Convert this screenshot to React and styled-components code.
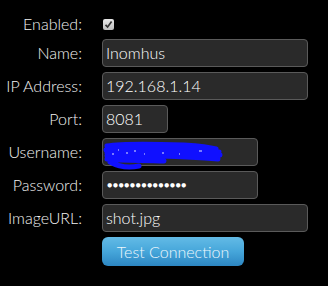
import React from 'react'
import styled, { createGlobalStyle } from 'styled-components'

const Global = createGlobalStyle`
  html, body {
    margin: 0;
    background: #000;
  }
  body {
    font-family: Lato, "Liberation Sans", sans-serif;
    font-weight: 300;
    color: #fff;
  }
`

const Form = styled.div`
  width: 328px;
  height: 286px;
  padding-top: 14px;
  box-sizing: border-box;
  display: grid;
  grid-template-columns: 82px auto;
  grid-template-rows: 20px repeat(7, 28px);
  column-gap: 20px;
  row-gap: 5px;
  align-items: center;
  align-content: start;
  justify-items: start;
`

const Label = styled.label`
  justify-self: end;
  font-size: 16px;
  color: #f2f2f2;
  line-height: 20px;
`

const Check = styled.span`
  width: 11px;
  height: 11px;
  margin-left: 1px;
  background: linear-gradient(#e8e8e8, #bdbdbd);
  border-radius: 2px;
  display: flex;
  align-items: center;
  justify-content: center;
`

const Field = styled.div`
  position: relative;
  width: ${p => p.$w}px;
  height: 28px;
  box-sizing: border-box;
  background: #2a2a2a;
  border: 1px solid #5a5a5a;
  border-radius: 4px;
  display: flex;
  align-items: center;
  padding-left: 3px;
  font-size: 16px;
  line-height: 20px;
  color: #fff;
  overflow: visible;
`

const Dots = styled.span`
  font-size: 9px;
  letter-spacing: 0.3px;
  padding-left: 1px;
`

const Scribble = styled.svg`
  position: absolute;
  left: 1px;
  top: 3px;
  overflow: visible;
`

const Button = styled.button`
  width: 142px;
  height: 29px;
  border: none;
  border-radius: 6px;
  background: linear-gradient(#63bbe6 0%, #46a6da 50%, #2c86c2 100%);
  color: #eef7fc;
  font-family: Lato, "Liberation Sans", sans-serif;
  font-weight: 300;
  font-size: 16px;
  padding: 0;
`

export default function App() {
  return (
    <>
      <Global />
      <Form>
        <Label>Enabled:</Label>
        <Check>
          <svg width="9" height="9" viewBox="0 0 9 9">
            <path d="M1.5 4.8 L3.6 7 L7.6 1.6" stroke="#333" strokeWidth="1.7" fill="none" />
          </svg>
        </Check>

        <Label>Name:</Label>
        <Field $w={206}>Inomhus</Field>

        <Label>IP Address:</Label>
        <Field $w={206}>192.168.1.14</Field>

        <Label>Port:</Label>
        <Field $w={66}>8081</Field>

        <Label>Username:</Label>
        <Field $w={156}>
          <Scribble width="120" height="24" viewBox="0 0 120 24">
            <path
              d="M3 4 C20 1 50 2 80 3 C95 4 105 5 112 7 M2 8 C30 5 70 6 115 10 M3 11 C30 9 80 10 116 13 M3 14 C30 13 80 14 114 17 M3 17 C20 19 40 18 60 19 M6 20 C15 25 25 26 35 24 M60 7 C80 9 100 13 114 14"
              stroke="#1010ff"
              strokeWidth="5"
              fill="none"
              strokeLinecap="round"
            />
            <path d="M8 12 h2 M22 11 h2 M40 12 h1 M58 11 h2 M75 12 h1 M95 9 h3 M14 8 h1 M30 9 h2" stroke="#dfe4ff" strokeWidth="1.2" />
          </Scribble>
        </Field>

        <Label>Password:</Label>
        <Field $w={156}>
          <Dots>●●●●●●●●●●●●●●</Dots>
        </Field>

        <Label>ImageURL:</Label>
        <Field $w={206}>shot.jpg</Field>

        <span />
        <Button>Test Connection</Button>
      </Form>
    </>
  )
}
